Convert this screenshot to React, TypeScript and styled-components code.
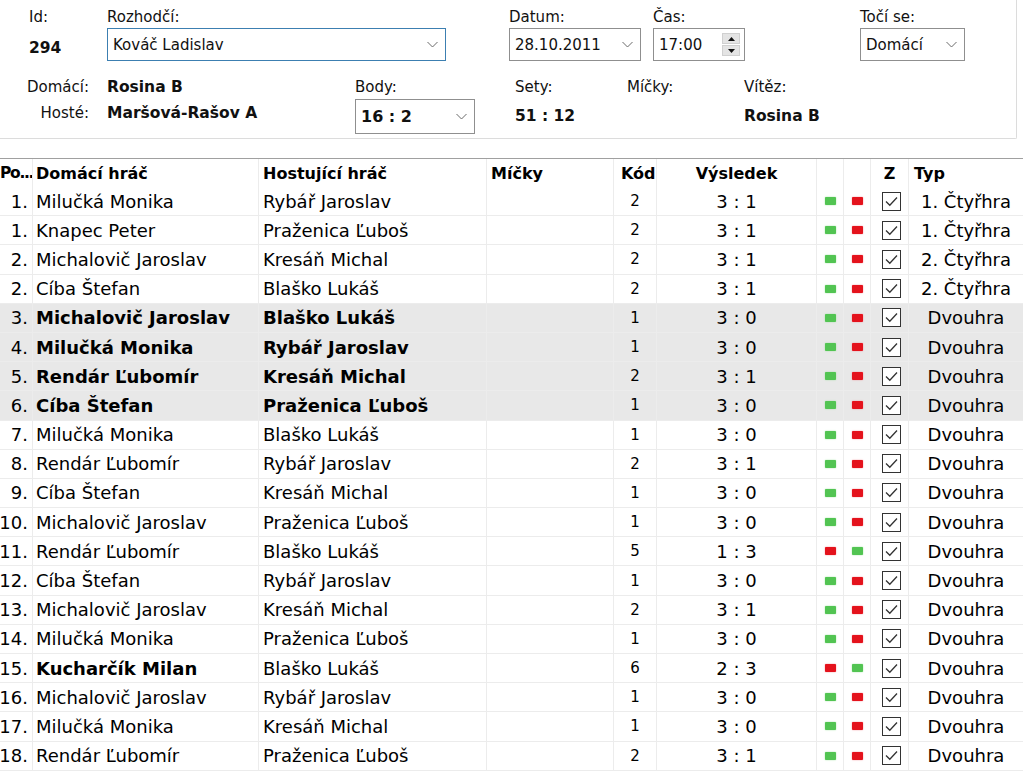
import React from "react";
import styled, { createGlobalStyle } from "styled-components";

const GlobalStyle = createGlobalStyle`
  body {
    margin: 0;
    background: #fff;
    font-family: "DejaVu Sans", Verdana, sans-serif;
    color: #000;
    overflow: hidden;
  }
`;

const COLUMNS = "33px 226px 228px 127px 43px 160px 27px 27px 38px 1fr";

const Page = styled.div`
  width: 1023px;
  display: flex;
  flex-direction: column;
`;

const Panel = styled.div`
  width: 1016px;
  height: 138px;
  border-right: 1px solid #dcdcdc;
  border-bottom: 1px solid #dcdcdc;
  border-bottom-right-radius: 2px;
  display: flex;
  flex-direction: column;
  font-size: 15px;
  color: #111;
`;

const FieldRow = styled.div<{ $top: number; $left?: number }>`
  display: flex;
  padding-top: ${p => p.$top}px;
  padding-left: ${p => p.$left || 0}px;
`;

const Field = styled.div<{ $w?: number }>`
  display: flex;
  flex-direction: column;
  width: ${p => (p.$w ? `${p.$w}px` : "auto")};
  flex: none;
`;

const Label = styled.div`
  height: 18px;
  line-height: 18px;
  white-space: nowrap;
`;

const Value = styled.div<{ $gap: number }>`
  margin-top: ${p => p.$gap}px;
  height: 18px;
  line-height: 18px;
  font-weight: bold;
  font-size: 15.5px;
  white-space: nowrap;
`;

const Box = styled.div<{ $w: number; $h?: number; $focus?: boolean; $gap?: number }>`
  box-sizing: border-box;
  width: ${p => p.$w}px;
  height: ${p => p.$h || 33}px;
  margin-top: ${p => (p.$gap === undefined ? 2 : p.$gap)}px;
  border: 1px solid ${p => (p.$focus ? "#3c7fb1" : "#8f8f8f")};
  background: #fff;
  display: flex;
  align-items: center;
  justify-content: space-between;
  padding: 0 7px 0 5px;
  font-size: 15px;
  white-space: nowrap;
`;

const BoxText = styled.span<{ $bold?: boolean }>`
  font-weight: ${p => (p.$bold ? "bold" : "normal")};
  font-size: ${p => (p.$bold ? "16px" : "15px")};
`;

const Spinner = styled.div`
  display: flex;
  flex-direction: column;
  gap: 1px;
  margin-right: -3px;
`;

const SpinButton = styled.div`
  width: 18px;
  height: 11px;
  background: #e4e4e4;
  border: 1px solid #d0d0d0;
  box-sizing: border-box;
  display: flex;
  align-items: center;
  justify-content: center;
`;

const Teams = styled.div`
  width: 355px;
  display: grid;
  grid-template-columns: 89px auto;
  column-gap: 18px;
  row-gap: 8px;
  align-content: start;
  flex: none;
`;

const TeamLabel = styled.div`
  text-align: right;
  height: 18px;
  line-height: 18px;
`;

const TeamValue = styled.div`
  height: 18px;
  line-height: 18px;
  font-weight: bold;
  font-size: 15.5px;
  white-space: nowrap;
`;

const Table = styled.div`
  margin-top: 19px;
  border-top: 1px solid #a0a0a0;
  display: flex;
  flex-direction: column;
`;

const HeadRow = styled.div`
  display: grid;
  grid-template-columns: ${COLUMNS};
  height: 28px;
  font-weight: bold;
  font-size: 16px;
`;

const Row = styled.div<{ $shaded?: boolean }>`
  display: grid;
  grid-template-columns: ${COLUMNS};
  height: 29.2px;
  box-sizing: border-box;
  border-bottom: 1px solid #ececec;
  background: ${p => (p.$shaded ? "#e8e8e8" : "#fff")};
  font-size: 18px;
`;

const Cell = styled.div<{ $align?: "left" | "center" | "right"; $bold?: boolean; $pad?: number; $size?: number }>`
  display: flex;
  align-items: center;
  justify-content: ${p =>
    p.$align === "center" ? "center" : p.$align === "right" ? "flex-end" : "flex-start"};
  padding: 0 ${p => (p.$align === "right" ? p.$pad || 0 : 0)}px 0
    ${p => (p.$align === "right" ? 0 : p.$pad || 0)}px;
  border-right: 1px solid #ececec;
  font-weight: ${p => (p.$bold ? "bold" : "inherit")};
  font-size: ${p => (p.$size ? `${p.$size}px` : "inherit")};
  white-space: nowrap;
  overflow: hidden;
  min-width: 0;
  &:last-child {
    border-right: none;
  }
`;

const PoCell = styled(Cell)`
  overflow: visible;
`;

const PoHead = styled(Cell)`
  font-size: 15.5px;
  letter-spacing: -1.3px;
`;

const Lamp = styled.div<{ $on: boolean }>`
  width: 11px;
  height: 8px;
  border-radius: 1px;
  background: ${p => (p.$on ? "#52c452" : "#e4121c")};
  box-shadow: 0 0 1.5px ${p => (p.$on ? "#8fdc8f" : "#f07a80")};
`;

const CheckBox = styled.div`
  width: 19px;
  height: 19px;
  box-sizing: border-box;
  border: 1px solid #333;
  background: #fff;
  display: flex;
  align-items: center;
  justify-content: center;
  margin-left: 3px;
`;

function Chevron() {
  return (
    <svg width="11" height="7" viewBox="0 0 11 7">
      <polyline points="0.5,1 5.5,6 10.5,1" fill="none" stroke="#6a6a6a" strokeWidth="1" />
    </svg>
  );
}

function Tri({ up }: { up?: boolean }) {
  return (
    <svg width="7" height="4" viewBox="0 0 7 4">
      <polygon points={up ? "0,4 7,4 3.5,0" : "0,0 7,0 3.5,4"} fill="#111" />
    </svg>
  );
}

function Check() {
  return (
    <svg width="15" height="13" viewBox="0 0 15 13">
      <polyline points="2,6.5 5.8,10.2 13,2.5" fill="none" stroke="#333" strokeWidth="1.3" />
    </svg>
  );
}

type Match = {
  po: string;
  home: string;
  away: string;
  kod: number;
  result: string;
  homeWon: boolean;
  type: string;
  bold?: "both" | "home";
  shaded?: boolean;
};

const MATCHES: Match[] = [
  { po: "1.", home: "Milučká Monika", away: "Rybář Jaroslav", kod: 2, result: "3 : 1", homeWon: true, type: "1. Čtyřhra" },
  { po: "1.", home: "Knapec Peter", away: "Praženica Ľuboš", kod: 2, result: "3 : 1", homeWon: true, type: "1. Čtyřhra" },
  { po: "2.", home: "Michalovič Jaroslav", away: "Kresáň Michal", kod: 2, result: "3 : 1", homeWon: true, type: "2. Čtyřhra" },
  { po: "2.", home: "Cíba Štefan", away: "Blaško Lukáš", kod: 2, result: "3 : 1", homeWon: true, type: "2. Čtyřhra" },
  { po: "3.", home: "Michalovič Jaroslav", away: "Blaško Lukáš", kod: 1, result: "3 : 0", homeWon: true, type: "Dvouhra", bold: "both", shaded: true },
  { po: "4.", home: "Milučká Monika", away: "Rybář Jaroslav", kod: 1, result: "3 : 0", homeWon: true, type: "Dvouhra", bold: "both", shaded: true },
  { po: "5.", home: "Rendár Ľubomír", away: "Kresáň Michal", kod: 2, result: "3 : 1", homeWon: true, type: "Dvouhra", bold: "both", shaded: true },
  { po: "6.", home: "Cíba Štefan", away: "Praženica Ľuboš", kod: 1, result: "3 : 0", homeWon: true, type: "Dvouhra", bold: "both", shaded: true },
  { po: "7.", home: "Milučká Monika", away: "Blaško Lukáš", kod: 1, result: "3 : 0", homeWon: true, type: "Dvouhra" },
  { po: "8.", home: "Rendár Ľubomír", away: "Rybář Jaroslav", kod: 2, result: "3 : 1", homeWon: true, type: "Dvouhra" },
  { po: "9.", home: "Cíba Štefan", away: "Kresáň Michal", kod: 1, result: "3 : 0", homeWon: true, type: "Dvouhra" },
  { po: "10.", home: "Michalovič Jaroslav", away: "Praženica Ľuboš", kod: 1, result: "3 : 0", homeWon: true, type: "Dvouhra" },
  { po: "11.", home: "Rendár Ľubomír", away: "Blaško Lukáš", kod: 5, result: "1 : 3", homeWon: false, type: "Dvouhra" },
  { po: "12.", home: "Cíba Štefan", away: "Rybář Jaroslav", kod: 1, result: "3 : 0", homeWon: true, type: "Dvouhra" },
  { po: "13.", home: "Michalovič Jaroslav", away: "Kresáň Michal", kod: 2, result: "3 : 1", homeWon: true, type: "Dvouhra" },
  { po: "14.", home: "Milučká Monika", away: "Praženica Ľuboš", kod: 1, result: "3 : 0", homeWon: true, type: "Dvouhra" },
  { po: "15.", home: "Kucharčík Milan", away: "Blaško Lukáš", kod: 6, result: "2 : 3", homeWon: false, type: "Dvouhra", bold: "home" },
  { po: "16.", home: "Michalovič Jaroslav", away: "Rybář Jaroslav", kod: 1, result: "3 : 0", homeWon: true, type: "Dvouhra" },
  { po: "17.", home: "Milučká Monika", away: "Kresáň Michal", kod: 1, result: "3 : 0", homeWon: true, type: "Dvouhra" },
  { po: "18.", home: "Rendár Ľubomír", away: "Praženica Ľuboš", kod: 2, result: "3 : 1", homeWon: true, type: "Dvouhra" },
];

export default function App() {
  return (
    <Page>
      <GlobalStyle />
      <Panel>
        <FieldRow $top={8} $left={29}>
          <Field $w={78}>
            <Label>Id:</Label>
            <Value $gap={13}>294</Value>
          </Field>
          <Field $w={402}>
            <Label>Rozhodčí:</Label>
            <Box $w={339} $focus>
              <BoxText>Kováč Ladislav</BoxText>
              <Chevron />
            </Box>
          </Field>
          <Field $w={144}>
            <Label>Datum:</Label>
            <Box $w={132} $gap={2}>
              <BoxText>28.10.2011</BoxText>
              <Chevron />
            </Box>
          </Field>
          <Field $w={207}>
            <Label>Čas:</Label>
            <Box $w={92}>
              <BoxText>17:00</BoxText>
              <Spinner>
                <SpinButton>
                  <Tri up />
                </SpinButton>
                <SpinButton>
                  <Tri />
                </SpinButton>
              </Spinner>
            </Box>
          </Field>
          <Field>
            <Label>Točí se:</Label>
            <Box $w={105}>
              <BoxText>Domácí</BoxText>
              <Chevron />
            </Box>
          </Field>
        </FieldRow>
        <FieldRow $top={17}>
          <Teams>
            <TeamLabel>Domácí:</TeamLabel>
            <TeamValue>Rosina B</TeamValue>
            <TeamLabel>Hosté:</TeamLabel>
            <TeamValue>Maršová-Rašov A</TeamValue>
          </Teams>
          <Field $w={160}>
            <Label>Body:</Label>
            <Box $w={120} $h={35} $gap={3}>
              <BoxText $bold>16 : 2</BoxText>
              <Chevron />
            </Box>
          </Field>
          <Field $w={112}>
            <Label>Sety:</Label>
            <Value $gap={11}>51 : 12</Value>
          </Field>
          <Field $w={117}>
            <Label>Míčky:</Label>
          </Field>
          <Field>
            <Label>Vítěz:</Label>
            <Value $gap={11}>Rosina B</Value>
          </Field>
        </FieldRow>
      </Panel>

      <Table>
        <HeadRow>
          <PoHead>Po...</PoHead>
          <Cell $pad={3}>Domácí hráč</Cell>
          <Cell $pad={4}>Hostující hráč</Cell>
          <Cell $pad={4}>Míčky</Cell>
          <Cell $pad={7}>Kód</Cell>
          <Cell $align="center">Výsledek</Cell>
          <Cell />
          <Cell />
          <Cell $align="center">Z</Cell>
          <Cell $pad={5}>Typ</Cell>
        </HeadRow>
        {MATCHES.map((m, i) => (
          <Row key={i} $shaded={m.shaded}>
            <PoCell $align="right" $pad={4}>
              {m.po}
            </PoCell>
            <Cell $pad={3} $bold={!!m.bold}>
              {m.home}
            </Cell>
            <Cell $pad={4} $bold={m.bold === "both"}>
              {m.away}
            </Cell>
            <Cell />
            <Cell $align="center" $size={15}>
              {m.kod}
            </Cell>
            <Cell $align="center">{m.result}</Cell>
            <Cell $align="center">
              <Lamp $on={m.homeWon} />
            </Cell>
            <Cell $align="center">
              <Lamp $on={!m.homeWon} />
            </Cell>
            <Cell $align="center">
              <CheckBox>
                <Check />
              </CheckBox>
            </Cell>
            <Cell $align="center">{m.type}</Cell>
          </Row>
        ))}
      </Table>
    </Page>
  );
}
